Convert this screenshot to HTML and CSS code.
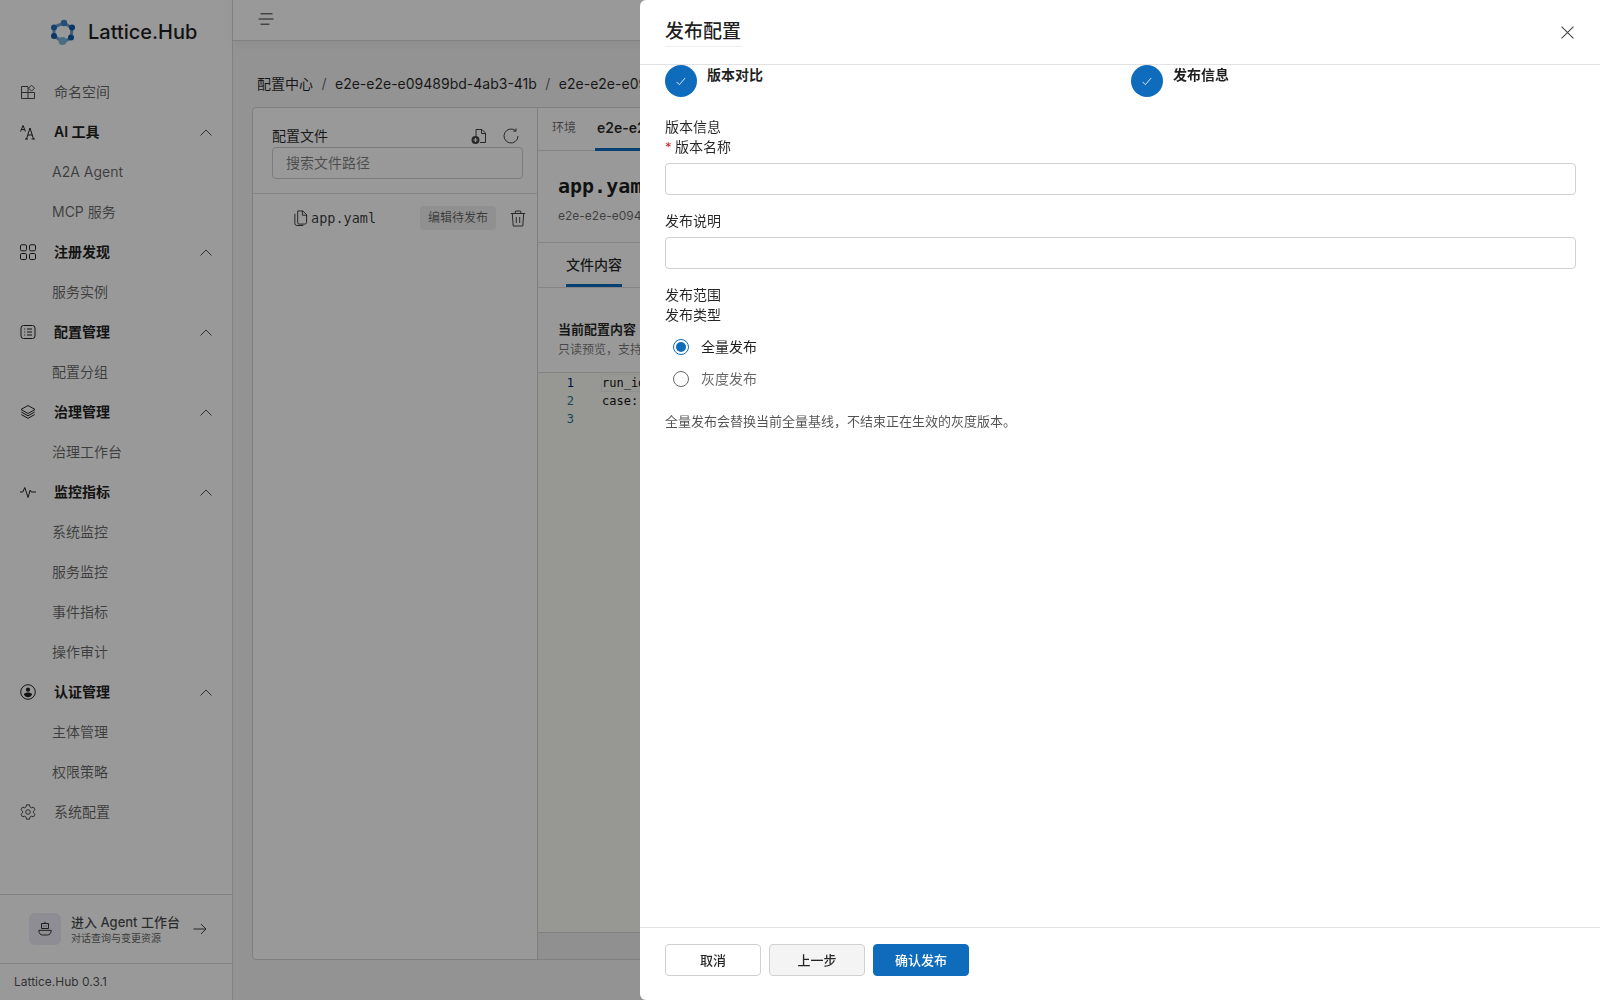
FILE: index.html
```html
<!DOCTYPE html>
<html lang="zh-CN">
<head>
<meta charset="utf-8">
<title>发布配置</title>
<link rel="stylesheet" href="styles.css">
</head>
<body>
<div class="app">
  <aside class="sidebar">
    <div class="brand">
      <svg class="brand-logo" viewBox="0 0 28 28" width="28" height="28">
        <path d="M15 5 L23 10 L22 20 L14 24 L5 18 L5 9 Z" fill="none" stroke="#3f7fc4" stroke-width="3" opacity=".75"/>
        <circle cx="15" cy="5" r="3.2" fill="#3f80c6"/>
        <circle cx="23" cy="9.5" r="3" fill="#0f5cab"/>
        <circle cx="22" cy="19.5" r="3" fill="#0f5cab"/>
        <circle cx="13.5" cy="23" r="4" fill="#7ab8dc"/>
        <circle cx="5" cy="18" r="3" fill="#0f5cab"/>
        <circle cx="5" cy="9.5" r="3" fill="#1f6cbc"/>
      </svg>
      <span class="brand-name">Lattice.Hub</span>
    </div>
    <nav class="nav">
      <div class="nav-item">
        <svg class="nav-icon" viewBox="0 0 16 16"><path d="M1.5 2.5h6.5v12H1.5zM1.5 8.5h13v6H8M11.5 1.2l3 3-3 3-3-3z"/></svg>
        <span class="nav-text">命名空间</span>
      </div>
      <div class="nav-item nav-group">
        <svg class="nav-icon" viewBox="0 0 16 16"><path d="M.5 7.5 3 1.5l2.5 6M1.4 5.6h3.2M6.5 15 10 4l3.500 11M5 15h3M11.500 15h3.500M7.800 11h4.400"/></svg>
        <span class="nav-text">AI 工具</span>
        <svg class="chevron" viewBox="0 0 12 7"><path d="M.5 6.500 6 1l5.500 5.500"/></svg>
      </div>
      <div class="nav-sub">A2A Agent</div>
      <div class="nav-sub">MCP 服务</div>
      <div class="nav-item nav-group">
        <svg class="nav-icon" viewBox="0 0 16 16"><rect x=".5" y=".8" width="6" height="6" rx="1.200"/><rect x="9.500" y=".8" width="6" height="6" rx="1.200"/><rect x=".5" y="9.500" width="6" height="6" rx="1.200"/><rect x="9.500" y="9.500" width="6" height="6" rx="1.200"/></svg>
        <span class="nav-text">注册发现</span>
        <svg class="chevron" viewBox="0 0 12 7"><path d="M.5 6.500 6 1l5.500 5.500"/></svg>
      </div>
      <div class="nav-sub">服务实例</div>
      <div class="nav-item nav-group">
        <svg class="nav-icon" viewBox="0 0 16 16"><rect x="1" y="1.500" width="14" height="13" rx="2.500"/><path d="M4.200 5h1M4.200 8h1M4.200 11h1M7 5h5M7 8h5M7 11h5"/></svg>
        <span class="nav-text">配置管理</span>
        <svg class="chevron" viewBox="0 0 12 7"><path d="M.5 6.500 6 1l5.500 5.500"/></svg>
      </div>
      <div class="nav-sub">配置分组</div>
      <div class="nav-item nav-group">
        <svg class="nav-icon" viewBox="0 0 16 16"><path d="M8 1.500 15 5.500 8 9.500 1 5.500zM1.300 8 8 11.800 14.700 8M1.300 10.500 8 14.300l6.700-3.800"/></svg>
        <span class="nav-text">治理管理</span>
        <svg class="chevron" viewBox="0 0 12 7"><path d="M.5 6.500 6 1l5.500 5.500"/></svg>
      </div>
      <div class="nav-sub">治理工作台</div>
      <div class="nav-item nav-group">
        <svg class="nav-icon" viewBox="0 0 16 16"><path d="M0 8h2.800L4.800 3.500 8 13.500l2.200-7.500 1 2h4.800"/></svg>
        <span class="nav-text">监控指标</span>
        <svg class="chevron" viewBox="0 0 12 7"><path d="M.5 6.500 6 1l5.500 5.500"/></svg>
      </div>
      <div class="nav-sub">系统监控</div>
      <div class="nav-sub">服务监控</div>
      <div class="nav-sub">事件指标</div>
      <div class="nav-sub">操作审计</div>
      <div class="nav-item nav-group">
        <svg class="nav-icon" viewBox="0 0 16 16"><circle cx="8" cy="8" r="7.300"/><circle class="solid" cx="8" cy="5.700" r="2.100"/><path class="solid" d="M3.800 10.300c.8-1.300 2.500-1.800 4.200-1.800s3.400.5 4.200 1.800c-.8 1.800-2.400 3-4.200 3s-3.400-1.200-4.200-3z"/></svg>
        <span class="nav-text">认证管理</span>
        <svg class="chevron" viewBox="0 0 12 7"><path d="M.5 6.500 6 1l5.500 5.500"/></svg>
      </div>
      <div class="nav-sub">主体管理</div>
      <div class="nav-sub">权限策略</div>
      <div class="nav-item">
        <svg class="nav-icon" viewBox="0 0 16 16"><path d="M6.500.8h3l.5 2.200 1.400.8 2.100-.7 1.500 2.600-1.600 1.500v1.600l1.600 1.500-1.500 2.600-2.100-.7-1.400.8-.5 2.200h-3L6 13l-1.400-.8-2.100.7L1 10.300l1.600-1.500V7.200L1 5.700l1.500-2.600 2.100.7L6 3z"/><circle cx="8" cy="8" r="2.300"/></svg>
        <span class="nav-text">系统配置</span>
      </div>
    </nav>
    <div class="agent-entry">
      <div class="agent-icon">
        <svg viewBox="0 0 16 16" width="16" height="16"><path d="M4.500 2.500h7v5h-7zM8 .8v1.700M1.800 9.300h12.400c0 3-1.600 4.700-3.700 4.700h-5c-2.100 0-3.700-1.700-3.700-4.700zM6.500 5h.8M8.700 5h.8"/></svg>
      </div>
      <div class="agent-text">
        <div class="agent-title">进入 Agent 工作台</div>
        <div class="agent-sub">对话查询与变更资源</div>
      </div>
      <svg class="agent-arrow" viewBox="0 0 14 12"><path d="M.5 6h12.500M8 1l5 5-5 5"/></svg>
    </div>
    <div class="version">Lattice.Hub 0.3.1</div>
  </aside>

  <main class="main">
    <header class="topbar">
      <svg class="menu-icon" viewBox="0 0 16 12"><path d="M2.500.8h12M.5 6h15M2.500 11.200h9"/></svg>
    </header>
    <div class="content">
      <div class="crumbs">
        <span>配置中心</span><span class="crumb-sep">/</span>
        <span>e2e-e2e-e09489bd-4ab3-41b</span><span class="crumb-sep">/</span>
        <span>e2e-e2e-e09489bd-4ab3-41b</span>
      </div>
      <section class="card">
        <div class="files">
          <div class="files-head">
            <div class="files-title-row">
              <span class="files-title">配置文件</span>
              <svg class="file-add" viewBox="0 0 16 16"><path d="M5 10V1.500h6l3.500 3.500v9.500H9M10.500 1.500V5.500h4"/><circle class="solid" cx="4.500" cy="12" r="4"/><path class="plus" d="M2.500 12h4M4.500 10v4"/></svg>
              <svg class="refresh" viewBox="0 0 16 16"><path d="M12.700 2.800 A7 7 0 1 0 15 8M13 .5v2.700h-2.700"/></svg>
            </div>
            <div class="search">搜索文件路径</div>
          </div>
          <div class="file-row">
            <svg class="file-icon" viewBox="0 0 16 17"><path d="M5 1h5.500L14.500 5v8.500A2 2 0 0 1 12.500 15H6.500A1.500 1.500 0 0 1 5 13.500zM10 1v4.500h4.500M2 4v10.500A2.200 2.200 0 0 0 4.200 16.500H11"/></svg>
            <span class="file-name">app.yaml</span>
            <span class="badge">编辑待发布</span>
            <svg class="trash" viewBox="0 0 16 17"><path d="M.8 3.500h14.400M5 3.500 5.500 1h5L11 3.500M2.300 3.500 3.200 16h9.600l.9-12.500M6.300 7v6M9.700 7v6"/></svg>
          </div>
        </div>
        <div class="detail">
          <div class="env-tabs">
            <span class="env-label">环境</span>
            <span class="env-tab">e2e-e2e-e09489bd-4ab3-41b</span>
          </div>
          <div class="detail-head">
            <h2 class="detail-title">app.yaml</h2>
            <div class="detail-sub">e2e-e2e-e09489bd-4ab3-41b</div>
          </div>
          <div class="content-tabs"><span class="content-tab">文件内容</span></div>
          <div class="section-head">
            <div class="section-title">当前配置内容</div>
            <div class="section-sub">只读预览，支持语法高亮</div>
          </div>
          <div class="editor">
            <div class="code-line current"><span class="ln ln-active">1</span><span class="code">run_id: e09489bd</span></div>
            <div class="code-line"><span class="ln">2</span><span class="code">case: publish</span></div>
            <div class="code-line"><span class="ln">3</span><span class="code"></span></div>
          </div>
          <div class="editor-foot"></div>
        </div>
      </section>
    </div>
  </main>
</div>

<div class="mask"></div>

<aside class="drawer">
  <div class="drawer-head">
    <h1 class="drawer-title">发布配置</h1>
    <svg class="close" viewBox="0 0 12 12"><path d="M.5.500l11 11M11.500.5l-11 11"/></svg>
  </div>
  <div class="drawer-body">
    <div class="steps">
      <div class="step">
        <span class="step-dot"><svg viewBox="0 0 12 10" width="10" height="9"><path d="M.8 5.500 4 8.800 11 .8"/></svg></span>
        <span class="step-label">版本对比</span>
      </div>
      <div class="step">
        <span class="step-dot"><svg viewBox="0 0 12 10" width="10" height="9"><path d="M.8 5.500 4 8.800 11 .8"/></svg></span>
        <span class="step-label">发布信息</span>
      </div>
    </div>
    <div class="form">
      <div class="form-line">版本信息</div>
      <div class="form-line"><span class="req">*</span>版本名称</div>
      <div class="input"></div>
      <div class="form-line field-gap">发布说明</div>
      <div class="input"></div>
      <div class="form-line field-gap">发布范围</div>
      <div class="form-line">发布类型</div>
      <div class="radios">
        <div class="radio-row"><span class="radio checked"></span><span class="radio-label">全量发布</span></div>
        <div class="radio-row"><span class="radio"></span><span class="radio-label muted">灰度发布</span></div>
      </div>
      <div class="note">全量发布会替换当前全量基线，不结束正在生效的灰度版本。</div>
    </div>
  </div>
  <div class="drawer-foot">
    <button class="btn">取消</button>
    <button class="btn btn-soft">上一步</button>
    <button class="btn btn-primary">确认发布</button>
  </div>
</aside>
</body>
</html>
```

FILE: styles.css
```css
* { box-sizing: border-box; }
html, body { margin: 0; height: 100%; overflow: hidden; }
body {
  font-family: Inter, "Noto Sans CJK SC", sans-serif;
  font-size: 14px;
  line-height: 20px;
  color: rgba(0,0,0,.88);
  background: #f5f5f5;
}
svg { fill: none; stroke: currentColor; stroke-width: 1; display: block; flex: none; }
.solid { fill: currentColor; stroke: none; }

.app { display: flex; height: 1000px; }

/* sidebar */
.sidebar {
  width: 233px; flex: none; background: #fff;
  border-right: 1px solid #d9d9d9;
  display: flex; flex-direction: column;
}
.brand { height: 64px; display: flex; align-items: center; padding-left: 49px; gap: 11px; }
.brand-logo { stroke: none; margin-top: 0; }
.brand-name { font-size: 20px; font-weight: 500; line-height: 28px; color: #1f1f1f; }
.nav { flex: 1; padding-top: 8px; }
.nav-item { height: 40px; display: flex; align-items: center; padding-left: 20px; color: rgba(0,0,0,.62); }
.nav-icon { width: 16px; height: 16px; margin-right: 18px; color: #222; }
.nav-item:not(.nav-group) .nav-icon { color: #4a4a4a; }
.nav-group { color: #222; font-weight: 600; }
.nav-group .nav-text { flex: 1; }
.chevron { width: 12px; height: 7px; margin-right: 20px; color: #555; }
.nav-sub { height: 40px; line-height: 40px; padding-left: 52px; color: rgba(0,0,0,.6); }

.agent-entry {
  height: 69px; border-top: 1px solid #d9d9d9;
  display: flex; align-items: center; padding: 0 25px 0 29px;
}
.agent-icon {
  width: 32px; height: 32px; border-radius: 6px; background: #ececf6;
  display: flex; align-items: center; justify-content: center; color: #333; margin-right: 10px;
}
.agent-text { flex: 1; min-width: 0; }
.agent-title { font-size: 13px; line-height: 18px; font-weight: 500; color: rgba(0,0,0,.72); white-space: nowrap; }
.agent-sub { font-size: 10px; line-height: 15px; color: rgba(0,0,0,.65); white-space: nowrap; }
.agent-arrow { width: 14px; height: 12px; color: #444; }
.version {
  height: 37px; border-top: 1px solid #d9d9d9; padding-left: 14px;
  font-size: 12px; line-height: 36px; color: rgba(0,0,0,.7);
}

/* main */
.main { flex: 1; min-width: 0; display: flex; flex-direction: column; }
.topbar {
  height: 41px; flex: none; background: #fff; border-bottom: 1px solid #d9d9d9;
  display: flex; align-items: center; padding-left: 25px;
  box-shadow: 0 2px 10px rgba(0,0,0,.05);
}
.menu-icon { width: 16px; height: 12px; margin-top: -3px; color: #333; }
.content { flex: 1; min-height: 0; padding: 32px 20px 40px 19px; display: flex; flex-direction: column; }
.crumbs { height: 22px; line-height: 22px; margin: 0 0 12px 5px; display: flex; color: rgba(0,0,0,.85); white-space: nowrap; }
.crumb-sep { margin: 0 8px; color: rgba(0,0,0,.6); width: 6px; text-align: center; }
.card { flex: 1; min-height: 0; display: flex; border: 1px solid #d4d4d4; border-radius: 4px; background: #fff; overflow: hidden; }

.files { width: 285px; flex: none; border-right: 1px solid #d4d4d4; }
.files-head { height: 86px; border-bottom: 1px solid #dcdcdc; padding: 16px 14px 0 19px; }
.files-title-row { display: flex; align-items: center; height: 23px; color: rgba(0,0,0,.85); }
.files-title { flex: 1; }
.file-add { width: 16px; height: 16px; margin-right: 16px; color: #444; }
.plus { stroke: #fff; stroke-width: 1.200; }
.refresh { width: 16px; height: 16px; margin-right: 4px; color: #444; }
.search {
  height: 32px; border: 1px solid #cfcfcf; border-radius: 4px;
  padding-left: 13px; line-height: 30px; color: rgba(0,0,0,.5);
}
.file-row { display: flex; align-items: center; height: 48px; padding-left: 40px; }
.file-icon { width: 15px; height: 16px; margin-right: 3px; color: #333; }
.file-name { font-family: "DejaVu Sans Mono", monospace; font-size: 13.500px; color: rgba(0,0,0,.78); width: 109px; }
.badge {
  width: 76px; height: 24px; border-radius: 4px; background: #f0f0f0; text-align: center;
  font-size: 12px; line-height: 24px; color: rgba(0,0,0,.6);
}
.trash { width: 16px; height: 17px; margin-left: 14px; color: #444; }

.detail { flex: 1; min-width: 0; display: flex; flex-direction: column; }
.env-tabs { height: 43px; flex: none; display: flex; align-items: center; border-bottom: 1px solid #dcdcdc; padding-left: 14px; white-space: nowrap; }
.env-label { font-size: 12px; color: rgba(0,0,0,.6); margin-right: 21px; margin-top: -3px; }
.env-tab { font-weight: 600; height: 43px; line-height: 40px; padding: 0 2px; border-bottom: 3px solid #0f6cbd; margin-left: -2px; color: rgba(0,0,0,.85); }
.detail-head { height: 92px; flex: none; border-bottom: 1px solid #dcdcdc; padding: 21px 0 0 20px; white-space: nowrap; }
.detail-title { margin: 0; font-family: "DejaVu Sans Mono", monospace; font-size: 20px; line-height: 28px; font-weight: 700; color: rgba(0,0,0,.88); }
.detail-sub { font-size: 12px; line-height: 18px; margin-top: 7px; color: rgba(0,0,0,.6); }
.content-tabs { height: 45px; flex: none; border-bottom: 1px solid #dcdcdc; padding-left: 28px; }
.content-tab { display: inline-block; height: 44px; line-height: 44px; font-weight: 500; border-bottom: 3px solid #0f6cbd; color: rgba(0,0,0,.85); }
.section-head { height: 85px; flex: none; padding: 30px 0 0 20px; border-bottom: 1px solid #dcdcdc; white-space: nowrap; }
.section-title { font-size: 13px; line-height: 22px; font-weight: 600; color: rgba(0,0,0,.85); }
.section-sub { font-size: 12px; line-height: 18px; margin-top: 1px; color: rgba(0,0,0,.55); }
.editor { flex: 1; background: #fcfcf6; padding-top: 1px; font-family: "DejaVu Sans Mono", monospace; font-size: 12px; line-height: 18px; border-bottom: 1px solid #d4d4d4; }
.code-line { display: flex; height: 18px; }
.ln { width: 36px; text-align: right; color: #237893; flex: none; }
.ln-active { color: #0b216f; }
.code { margin-left: 27px; padding-left: 1px; flex: 1; color: #111; white-space: nowrap; }
.current .code { border: 1px solid #eeeeee; padding-left: 0; line-height: 16px; }
.editor-foot { height: 26px; flex: none; background: #f0f0f0; }

.mask { position: fixed; inset: 0; background: rgba(0,0,0,.4); }

/* drawer */
.drawer {
  position: fixed; top: 0; right: 0; bottom: 0; width: 960px; background: #fff;
  display: flex; flex-direction: column; border-radius: 6px 0 0 6px;
}
.drawer-head {
  height: 65px; flex: none; border-bottom: 1px solid #e2e2e2;
  display: flex; align-items: center; justify-content: space-between;
  padding: 0 26px 0 25px;
}
.drawer-title {
  margin: 0; font-size: 19px; line-height: 28px; font-weight: 500; color: rgba(0,0,0,.88);
  padding: 2px 1px 0 0; border-bottom: 1px solid #efefef; margin-top: -2px;
}
.close { width: 13px; height: 13px; color: #444; }
.drawer-body { flex: 1; min-height: 0; padding: 0 24px 0 25px; }
.steps { display: grid; grid-template-columns: 466px 1fr; }
.step { display: flex; height: 32px; }
.step-dot {
  width: 32px; height: 32px; border-radius: 50%; background: #0f6cbd; color: #fff;
  display: flex; align-items: center; justify-content: center; margin-right: 10px;
}
.step-label { font-weight: 600; line-height: 20px; color: rgba(0,0,0,.88); }
.form { padding-top: 20px; color: rgba(0,0,0,.85); }
.form-line { height: 20px; line-height: 20px; white-space: nowrap; }
.field-gap { margin-top: 16px; }
.req { color: #c4262e; margin-right: 4px; display: inline-block; width: 6px; font-size: 13px; }
.input { height: 32px; border: 1px solid #d0d0d0; border-radius: 4px; margin-top: 6px; background: #fff; }
.radios { padding: 6px 0 0 8px; }
.radio-row { display: flex; align-items: center; height: 32px; }
.radio { width: 16px; height: 16px; border-radius: 50%; border: 1px solid #666; margin-right: 12px; background: #fff; flex: none; }
.radio.checked { border-color: #0f6cbd; padding: 2px; background: #0f6cbd content-box; }
.radio-label { color: rgba(0,0,0,.88); }
.radio-label.muted { color: rgba(0,0,0,.6); }
.note { margin-top: 16px; font-size: 13px; line-height: 20px; color: rgba(0,0,0,.68); white-space: nowrap; }
.drawer-foot {
  height: 73px; flex: none; border-top: 1px solid #e2e2e2;
  display: flex; gap: 8px; padding: 16px 25px 0;
}
.btn {
  width: 96px; height: 32px; border: 1px solid #d0d0d0; border-radius: 4px; background: #fff;
  font: 500 13px/20px Inter, "Noto Sans CJK SC", sans-serif; color: rgba(0,0,0,.85); padding: 0;
}
.btn-soft { background: #f4f4f4; }
.btn-primary { background: #0f6cbd; border-color: #0f6cbd; color: #fff; }
```
